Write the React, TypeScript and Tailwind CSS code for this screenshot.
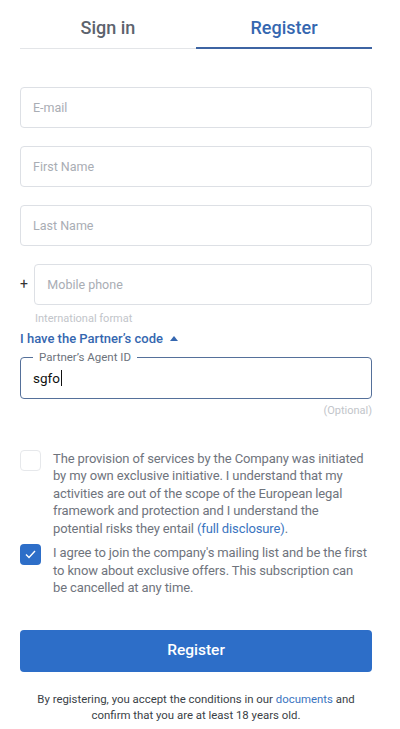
import React, { useState } from "react";

function TextField({ placeholder }: { placeholder: string }) {
  return (
    <input
      type="text"
      placeholder={placeholder}
      className="h-[41px] w-full rounded-[4px] border border-[#dde0e5] bg-white px-3 text-[12.5px] text-[#222] placeholder:text-[#a9adb4] outline-none"
    />
  );
}

export default function App() {
  const [mailing, setMailing] = useState(true);
  const [consent, setConsent] = useState(false);

  return (
    <div className="min-h-[729px] w-[400px] bg-white pl-5 pr-7 font-['Roboto',sans-serif]">
      {/* Tabs */}
      <div className="flex pt-[7px]">
        <button className="flex h-[42px] flex-1 items-center justify-center border-b border-[#e3e5e8] text-[18px] font-medium text-[#5d636d]">
          Sign in
        </button>
        <button className="flex h-[42px] flex-1 items-center justify-center border-b-2 border-[#3d64a3] text-[18px] font-medium text-[#3567b0]">
          Register
        </button>
      </div>

      {/* Fields */}
      <div className="mt-[38px] flex flex-col gap-[18px]">
        <TextField placeholder="E-mail" />
        <TextField placeholder="First Name" />
        <TextField placeholder="Last Name" />
        <div>
          <div className="flex items-center">
            <span className="w-[15px] text-[14px] text-[#333]">+</span>
            <TextField placeholder="Mobile phone" />
          </div>
          <div className="mt-[6px] pl-[15px] text-[11px] text-[#c2c5ca]">International format</div>
        </div>
      </div>

      {/* Partner code */}
      <button className="mt-[1px] flex items-center gap-[7px] text-[13px] font-medium text-[#3567b0]">
        I have the Partner’s code
        <svg width="8" height="5" viewBox="0 0 8 5"><path d="M0 5 L4 0 L8 5 Z" fill="#3567b0" /></svg>
      </button>
      <fieldset className="mt-[3px] h-[48px] rounded-[4px] border border-[#55709a] px-[12px]">
        <legend className="px-[6px] text-[11.5px] leading-[12px] text-[#6d737c]">Partner’s Agent ID</legend>
        <div className="flex h-[30px] items-center text-[13.5px] text-[#111]">
          sgfo<span className="ml-[1px] inline-block h-[16px] w-px bg-[#111]" />
        </div>
      </fieldset>
      <div className="mt-[4px] text-right text-[11px] text-[#c2c5ca]">(Optional)</div>

      {/* Checkboxes */}
      <div className="mt-[30px] flex flex-col gap-[7px]">
        <label className="flex items-start gap-[12px]">
          <span
            onClick={() => setConsent(!consent)}
            className="flex h-[21px] w-[21px] shrink-0 items-center justify-center rounded-[4px] border border-[#e6e8eb] bg-white"
          />
          <span className="text-[13px] leading-[17.5px] tracking-[-0.12px] text-[#6f747d]">
            The provision of services by the Company was initiated by my own exclusive initiative. I understand that my activities are out of the scope of the European legal framework and protection and I understand the potential{"\u00a0"}risks they entail <span className="text-[#3a74c0]">(full disclosure)</span>.
          </span>
        </label>
        <label className="flex items-start gap-[12px]">
          <span
            onClick={() => setMailing(!mailing)}
            className="flex h-[21px] w-[21px] shrink-0 items-center justify-center rounded-[4px] bg-[#2d6ec8]"
          >
            {mailing && (
              <svg width="11" height="9" viewBox="0 0 11 9">
                <path d="M1 4.5 L4 7.5 L10 1" fill="none" stroke="#fff" strokeWidth="1.4" />
              </svg>
            )}
          </span>
          <span className="text-[13px] leading-[17.5px] tracking-[-0.12px] text-[#6f747d]">
            I agree to join the company's mailing list and be the first to know about exclusive offers. This subscription can be{"\u00a0"}cancelled at any time.
          </span>
        </label>
      </div>

      {/* Submit */}
      <button className="mt-[33px] flex h-[42px] w-full items-center justify-center rounded-[4px] bg-[#2d6ec8] text-[15.5px] font-medium text-white">
        Register
      </button>

      <p className="mt-[19px] text-center text-[11.4px] leading-[16px] text-[#3a3f47]">
        By registering, you accept the conditions in our <span className="text-[#3a74c0]">documents</span> and
        <br />
        confirm that you are at least 18 years old.
      </p>
    </div>
  );
}
